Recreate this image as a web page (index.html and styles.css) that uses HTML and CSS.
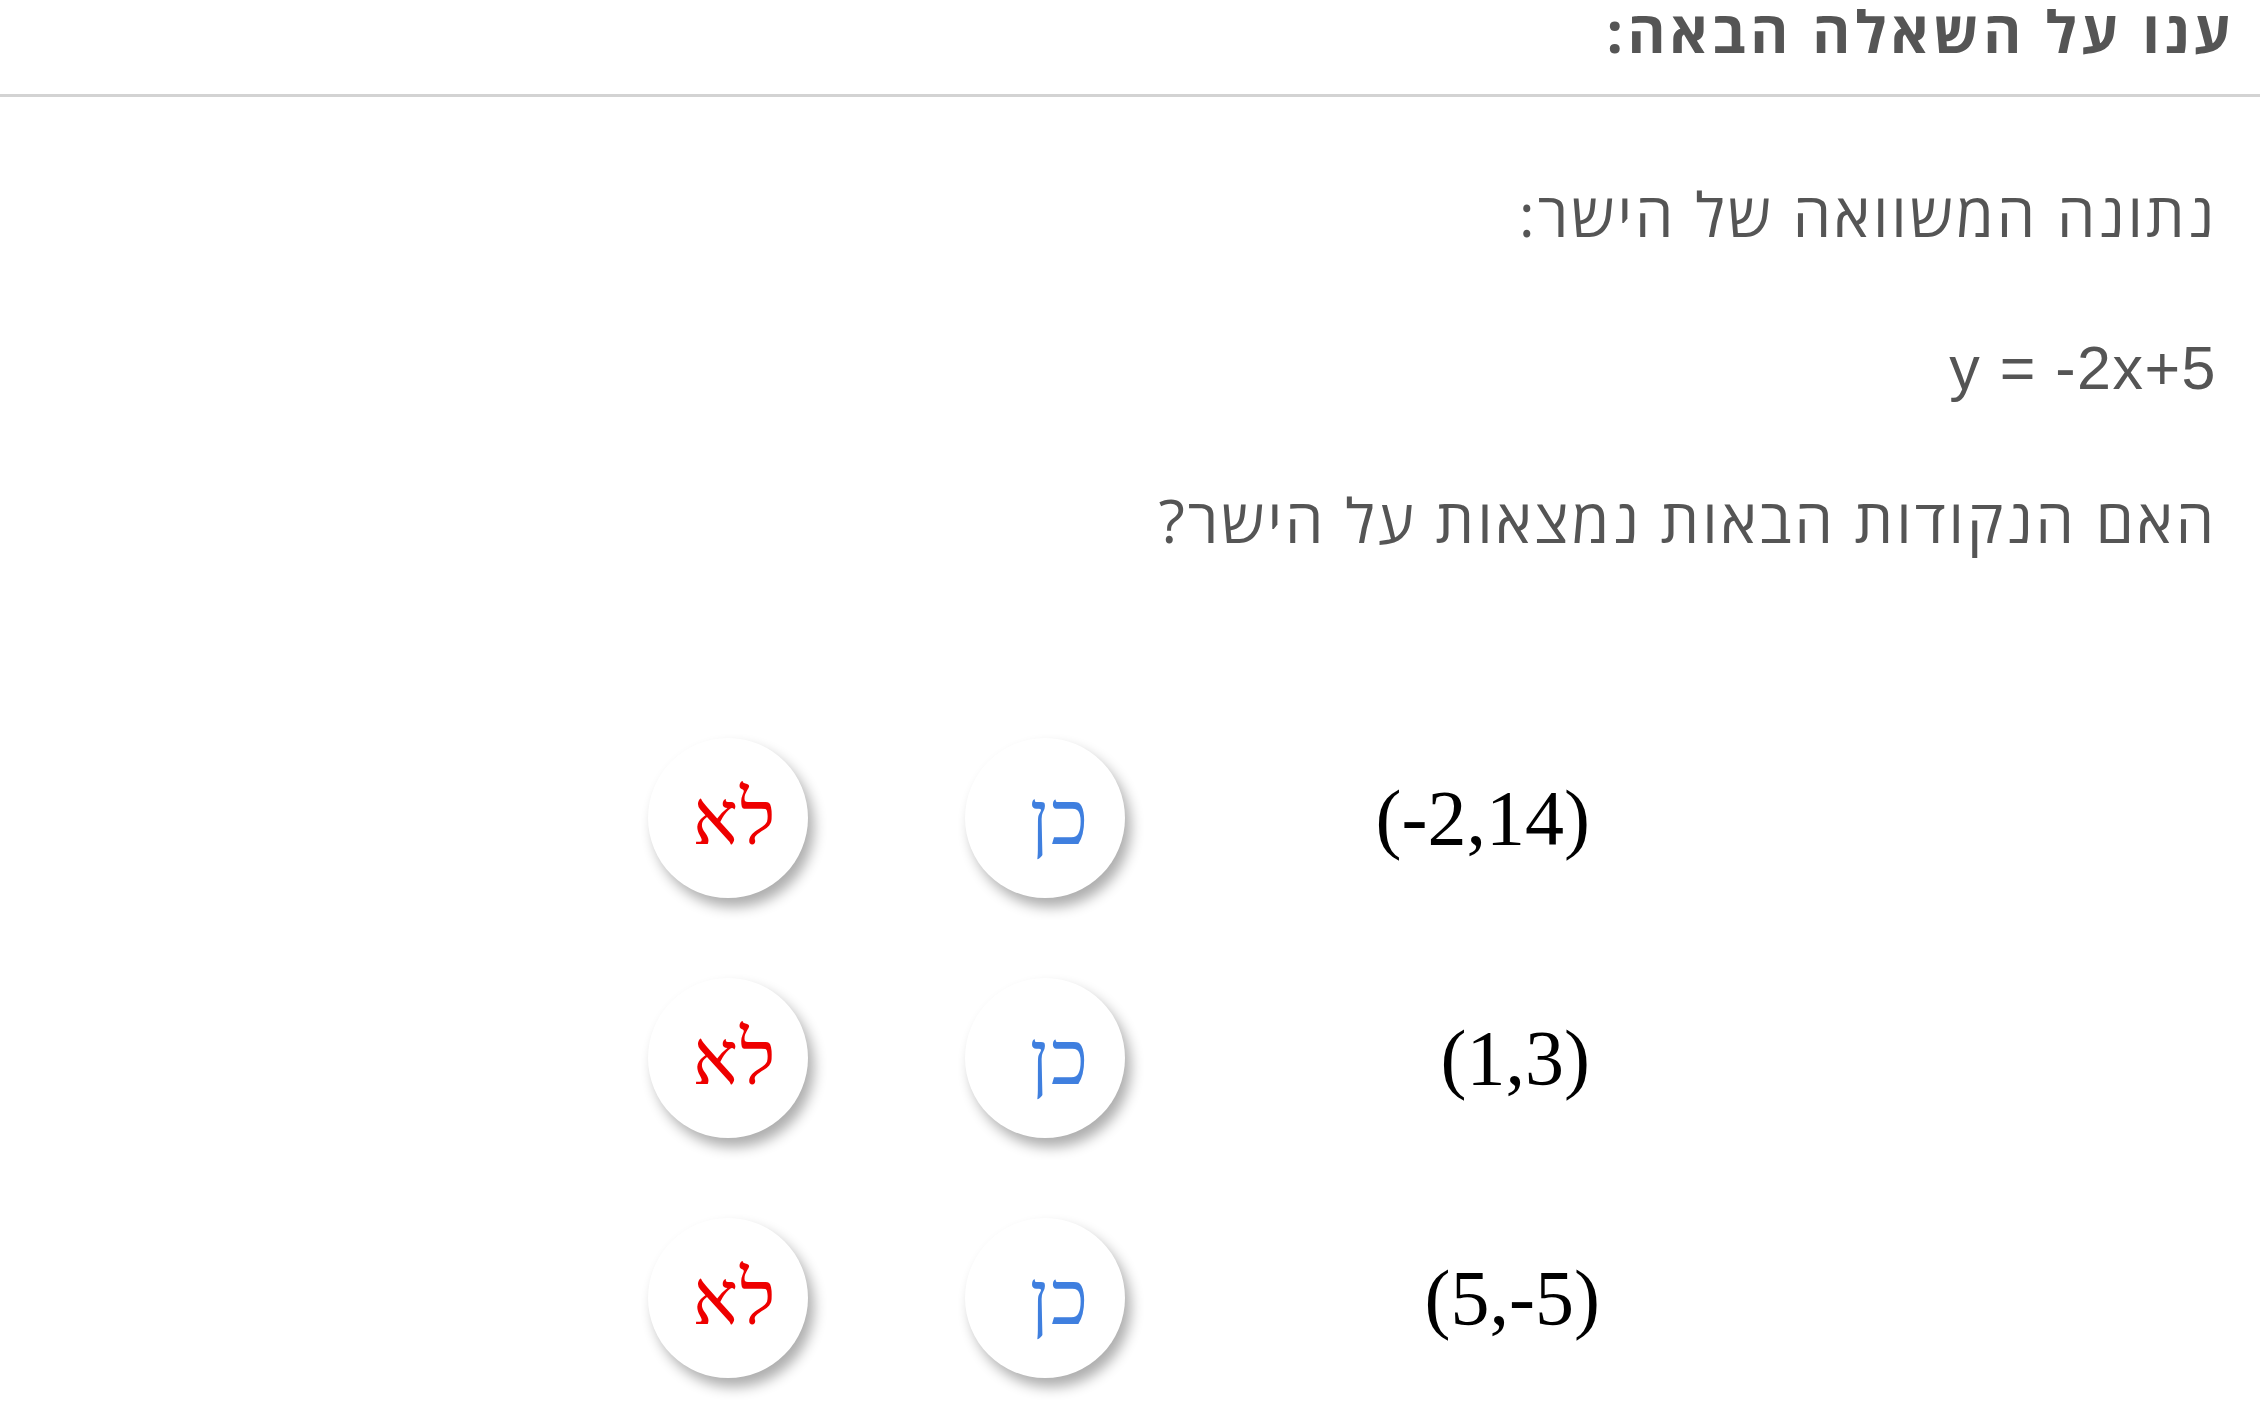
FILE: index.html
```html
<!DOCTYPE html>
<html lang="he" dir="rtl">
<head>
<meta charset="utf-8">
<title>שאלה</title>
<link rel="stylesheet" href="styles.css">
</head>
<body>
  <h1 class="title">ענו על השאלה הבאה:</h1>

  <section class="question">
    <p class="line">נתונה המשוואה של הישר:</p>
    <p class="line"><span class="eq" dir="ltr">y = -2x+5</span></p>
    <p class="line">האם הנקודות הבאות נמצאות על הישר?</p>
  </section>

  <section class="points">
    <div class="row">
      <div class="point"><span dir="ltr">(-2,14)</span></div>
      <div class="answers">
        <button class="btn yes">כן</button>
        <button class="btn no">לא</button>
      </div>
    </div>
    <div class="row">
      <div class="point"><span dir="ltr">(1,3)</span></div>
      <div class="answers">
        <button class="btn yes">כן</button>
        <button class="btn no">לא</button>
      </div>
    </div>
    <div class="row">
      <div class="point point-shift"><span dir="ltr">(5,-5)</span></div>
      <div class="answers">
        <button class="btn yes">כן</button>
        <button class="btn no">לא</button>
      </div>
    </div>
  </section>
</body>
</html>
```
FILE: styles.css
```css
html, body {
  margin: 0;
  padding: 0;
  background: #ffffff;
}

body {
  direction: rtl;
  font-family: "Open Sans", "Liberation Sans", sans-serif;
  color: #555555;
}

/* page heading with the grey rule underneath */
.title {
  margin: 0;
  padding: 3px 25px 35px 0;
  font-size: 58px;
  line-height: 56px;
  font-weight: 700;
  letter-spacing: 4.5px;
  color: #555555;
  border-bottom: 3px solid #d3d3d3;
}

/* question text */
.question {
  padding: 87px 43px 0 0;
}

.line {
  margin: 0 0 92px 0;
  font-size: 61px;
  line-height: 60px;
  font-weight: 400;
  letter-spacing: 3px;
}

.line:last-child {
  margin-bottom: 0;
}

.eq {
  font-family: "Liberation Sans", Arial, sans-serif;
  font-size: 61px;
  letter-spacing: 1.5px;
  unicode-bidi: isolate;
}

/* list of points with yes / no answers */
.points {
  margin-top: 148px;
  padding-right: 670px;
}

.row {
  display: flex;
  align-items: center;
  height: 240px;
}

.point {
  width: 465px;
  flex: none;
  text-align: right;
  font-family: "Liberation Serif", "Times New Roman", serif;
  font-size: 78px;
  line-height: 1;
  color: #000000;
}

.point-shift {
  margin-right: -10px;
  width: 475px;
}

.point span {
  unicode-bidi: isolate;
}

.answers {
  display: flex;
  gap: 157px;
}

.btn {
  width: 160px;
  height: 160px;
  flex: none;
  border: none;
  border-radius: 50%;
  background: #ffffff;
  box-shadow: 6px 9px 13px rgba(0, 0, 0, 0.32);
  display: flex;
  align-items: center;
  justify-content: center;
  padding: 0;
  font-family: "Liberation Serif", "Times New Roman", serif;
  font-size: 76px;
  line-height: 1;
  letter-spacing: 2px;
  cursor: pointer;
}

.btn.yes {
  color: #3f7fdf;
  padding-left: 30px;
}

.btn.no {
  color: #ee0000;
  padding-left: 14px;
}
```
